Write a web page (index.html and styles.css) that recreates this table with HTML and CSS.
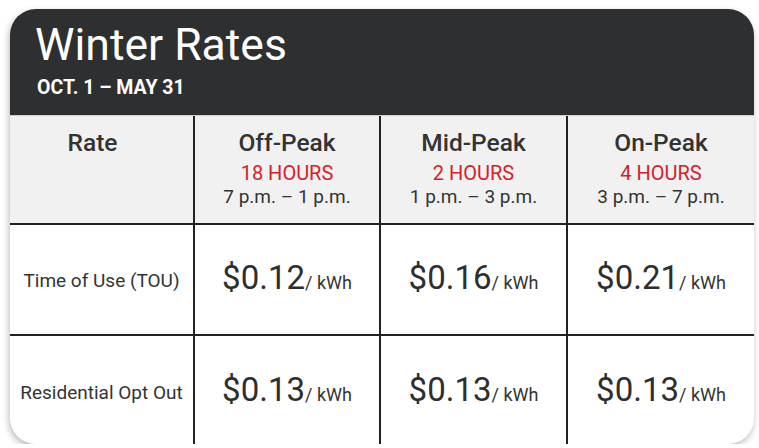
FILE: index.html
```html
<!DOCTYPE html>
<html>
<head>
<meta charset="utf-8">
<link rel="stylesheet" href="styles.css">
</head>
<body>
<div class="card">
  <div class="head">
    <div class="title">Winter Rates</div>
    <div class="sub">OCT. 1 – MAY 31</div>
  </div>
  <div class="grid">
    <div class="cell th rate"><div class="name">Rate</div></div>
    <div class="cell th"><div class="name">Off-Peak</div><div class="hours">18 HOURS</div><div class="time">7 p.m. – 1 p.m.</div></div>
    <div class="cell th"><div class="name">Mid-Peak</div><div class="hours">2 HOURS</div><div class="time">1 p.m. – 3 p.m.</div></div>
    <div class="cell th last"><div class="name">On-Peak</div><div class="hours">4 HOURS</div><div class="time">3 p.m. – 7 p.m.</div></div>

    <div class="cell td label">Time of Use (TOU)</div>
    <div class="cell td"><span class="val"><span class="price">$0.12</span><span class="unit">/ kWh</span></span></div>
    <div class="cell td"><span class="val"><span class="price">$0.16</span><span class="unit">/ kWh</span></span></div>
    <div class="cell td last"><span class="val"><span class="price">$0.21</span><span class="unit">/ kWh</span></span></div>

    <div class="cell td label bottom">Residential Opt Out</div>
    <div class="cell td bottom"><span class="val"><span class="price">$0.13</span><span class="unit">/ kWh</span></span></div>
    <div class="cell td bottom"><span class="val"><span class="price">$0.13</span><span class="unit">/ kWh</span></span></div>
    <div class="cell td bottom last"><span class="val"><span class="price">$0.13</span><span class="unit">/ kWh</span></span></div>
  </div>
</div>
</body>
</html>
```
FILE: styles.css
```css
html, body {
  margin: 0;
  padding: 0;
  background: #ffffff;
}
body {
  padding: 9px 5px 0 10px;
  font-family: Roboto, "Liberation Sans", sans-serif;
  color: #333333;
}
.card {
  width: 744px;
  height: 435px;
  border-radius: 26px;
  overflow: hidden;
  background: #ffffff;
  box-shadow: -1px 3px 7px rgba(0, 0, 0, 0.28);
}
.head {
  height: 106px;
  box-sizing: border-box;
  background: #2e2f31;
  color: #ffffff;
  padding: 10px 0 0 25px;
}
.title {
  font-size: 44.5px;
  line-height: 52px;
  font-weight: 400;
}
.sub {
  font-size: 19.5px;
  font-weight: 700;
  line-height: 24px;
  margin-top: 5px;
  padding-left: 2px;
}
.grid {
  display: grid;
  grid-template-columns: 185px 186px 187px 1fr;
  grid-template-rows: 109px 111px 111px;
  border-top: 1px solid #cfcfcf;
}
.cell {
  box-sizing: border-box;
  border-right: 2px solid #222222;
  border-bottom: 2px solid #222222;
  text-align: center;
}
.cell.last { border-right: none; }
.cell.bottom { border-bottom: none; }
.th {
  background: #f1f1f1;
  padding-top: 13px;
}
.rate { padding-right: 18px; }
.name {
  font-size: 24.5px;
  font-weight: 500;
  line-height: 28px;
  color: #333333;
}
.hours {
  font-size: 20px;
  line-height: 24px;
  color: #d3222a;
  margin-top: 4px;
}
.time {
  font-size: 19px;
  line-height: 22px;
  margin-top: 1px;
  color: #333333;
}
.td {
  display: flex;
  align-items: center;
  justify-content: center;
  padding-bottom: 4px;
}
.td.label {
  font-size: 19px;
  color: #333333;
  padding-bottom: 0;
  padding-top: 2px;
}
.price {
  font-size: 33px;
  font-weight: 400;
  color: #2e2e2e;
}
.unit {
  font-size: 18px;
  color: #333333;
}
```
